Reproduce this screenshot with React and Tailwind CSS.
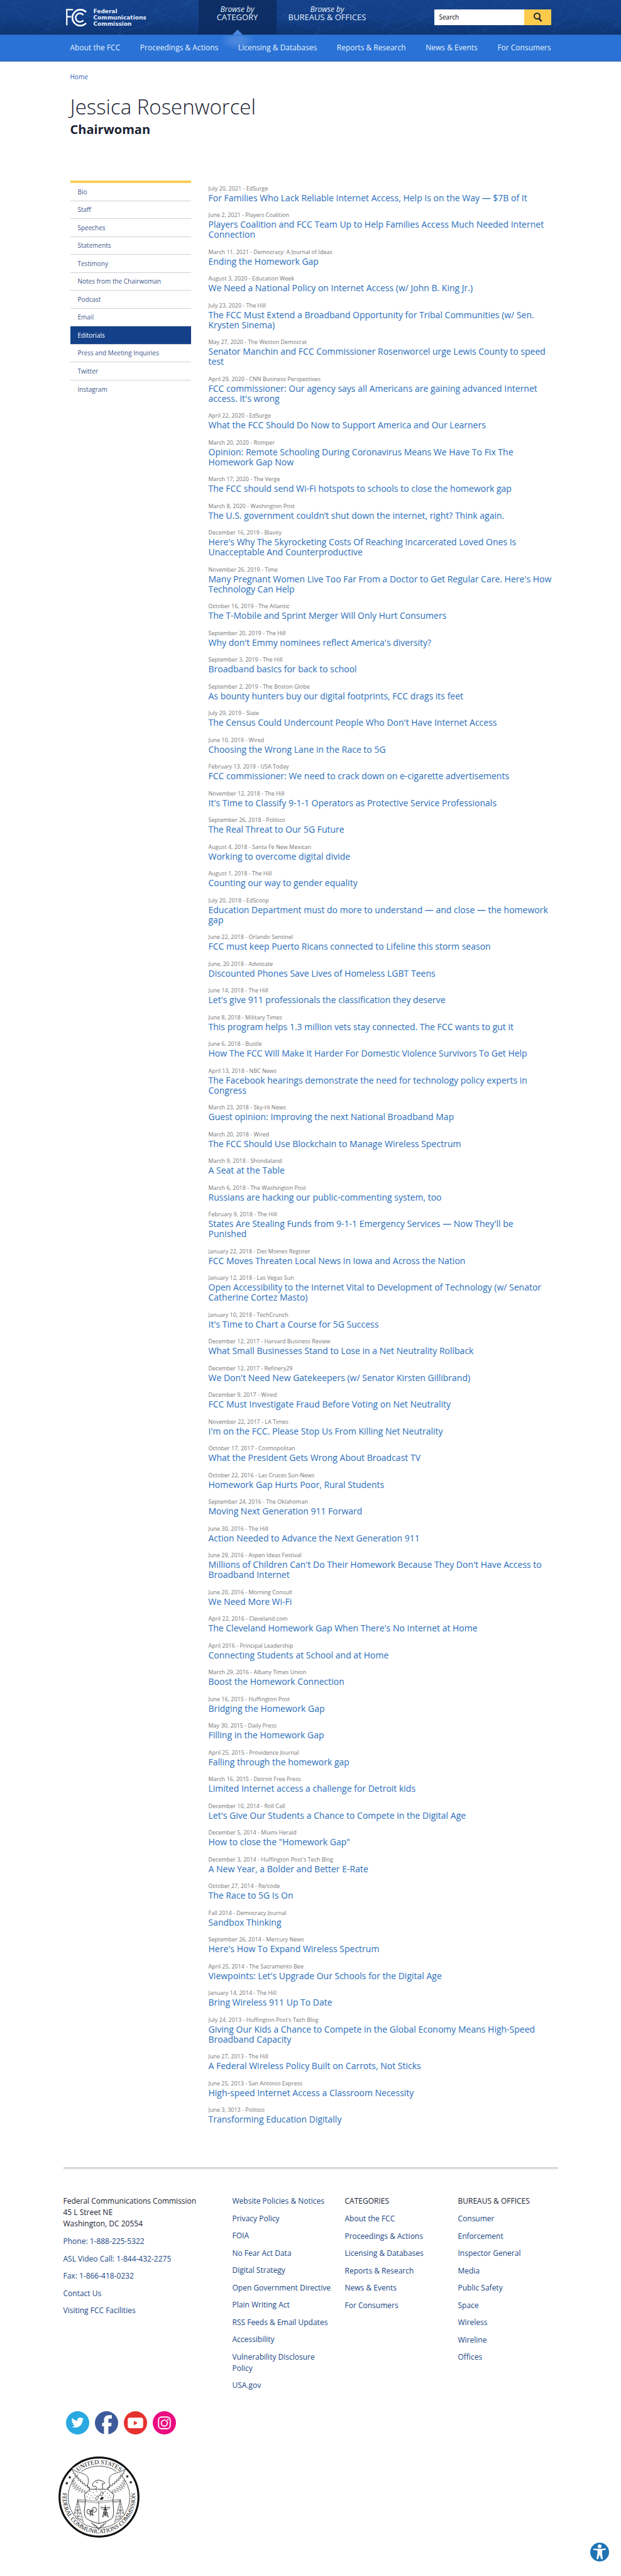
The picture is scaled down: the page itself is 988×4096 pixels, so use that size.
import React from "react";

const articles = [
  ["July 20, 2021 - EdSurge", "For Families Who Lack Reliable Internet Access, Help Is on the Way — $7B of It"],
  ["June 2, 2021 - Players Coalition", "Players Coalition and FCC Team Up to Help Families Access Much Needed Internet Connection"],
  ["March 11, 2021 - Democracy: A Journal of Ideas", "Ending the Homework Gap"],
  ["August 3, 2020 - Education Week", "We Need a National Policy on Internet Access (w/ John B. King Jr.)"],
  ["July 23, 2020 - The Hill", "The FCC Must Extend a Broadband Opportunity for Tribal Communities (w/ Sen. Krysten Sinema)"],
  ["May 27, 2020 - The Weston Democrat", "Senator Manchin and FCC Commissioner Rosenworcel urge Lewis County to speed test"],
  ["April 29, 2020 - CNN Business Perspectives", "FCC commissioner: Our agency says all Americans are gaining advanced Internet access. It's wrong"],
  ["April 22, 2020 - EdSurge", "What the FCC Should Do Now to Support America and Our Learners"],
  ["March 20, 2020 - Romper", "Opinion: Remote Schooling During Coronavirus Means We Have To Fix The Homework Gap Now"],
  ["March 17, 2020 - The Verge", "The FCC should send Wi-Fi hotspots to schools to close the homework gap"],
  ["March 8, 2020 - Washington Post", "The U.S. government couldn’t shut down the internet, right? Think again."],
  ["December 16, 2019 - Blavity", "Here's Why The Skyrocketing Costs Of Reaching Incarcerated Loved Ones Is Unacceptable And Counterproductive"],
  ["November 26, 2019 - Time", "Many Pregnant Women Live Too Far From a Doctor to Get Regular Care. Here's How Technology Can Help"],
  ["October 16, 2019 - The Atlantic", "The T-Mobile and Sprint Merger Will Only Hurt Consumers"],
  ["September 20, 2019 - The Hill", "Why don't Emmy nominees reflect America's diversity?"],
  ["September 3, 2019 - The Hill", "Broadband basics for back to school"],
  ["September 2, 2019 - The Boston Globe", "As bounty hunters buy our digital footprints, FCC drags its feet"],
  ["July 29, 2019 - Slate", "The Census Could Undercount People Who Don't Have Internet Access"],
  ["June 10, 2019 - Wired", "Choosing the Wrong Lane in the Race to 5G"],
  ["February 13, 2019 - USA Today", "FCC commissioner: We need to crack down on e-cigarette advertisements"],
  ["November 12, 2018 - The Hill", "It's Time to Classify 9-1-1 Operators as Protective Service Professionals"],
  ["September 26, 2018 - Politico", "The Real Threat to Our 5G Future"],
  ["August 4, 2018 - Santa Fe New Mexican", "Working to overcome digital divide"],
  ["August 1, 2018 - The Hill", "Counting our way to gender equality"],
  ["July 20, 2018 - EdScoop", "Education Department must do more to understand — and close — the homework gap"],
  ["June 22, 2018 - Orlando Sentinel", "FCC must keep Puerto Ricans connected to Lifeline this storm season"],
  ["June, 20 2018 - Advocate", "Discounted Phones Save Lives of Homeless LGBT Teens"],
  ["June 14, 2018 - The Hill", "Let's give 911 professionals the classification they deserve"],
  ["June 8, 2018 - Military Times", "This program helps 1.3 million vets stay connected. The FCC wants to gut it"],
  ["June 6, 2018 - Bustle", "How The FCC Will Make It Harder For Domestic Violence Survivors To Get Help"],
  ["April 13, 2018 - NBC News", "The Facebook hearings demonstrate the need for technology policy experts in Congress"],
  ["March 23, 2018 - Sky-Hi News", "Guest opinion: Improving the next National Broadband Map"],
  ["March 20, 2018 - Wired", "The FCC Should Use Blockchain to Manage Wireless Spectrum"],
  ["March 9, 2018 - Shondaland", "A Seat at the Table"],
  ["March 6, 2018 - The Washington Post", "Russians are hacking our public-commenting system, too"],
  ["February 9, 2018 - The Hill", "States Are Stealing Funds from 9-1-1 Emergency Services — Now They'll be Punished"],
  ["January 22, 2018 - Des Moines Register", "FCC Moves Threaten Local News in Iowa and Across the Nation"],
  ["January 12, 2018 - Las Vegas Sun", "Open Accessibility to the Internet Vital to Development of Technology (w/ Senator Catherine Cortez Masto)"],
  ["January 10, 2018 - TechCrunch", "It's Time to Chart a Course for 5G Success"],
  ["December 12, 2017 - Harvard Business Review", "What Small Businesses Stand to Lose in a Net Neutrality Rollback"],
  ["December 12, 2017 - Refinery29", "We Don't Need New Gatekeepers (w/ Senator Kirsten Gillibrand)"],
  ["December 9, 2017 - Wired", "FCC Must Investigate Fraud Before Voting on Net Neutrality"],
  ["November 22, 2017 - LA Times", "I'm on the FCC. Please Stop Us From Killing Net Neutrality"],
  ["October 17, 2017 - Cosmopolitan", "What the President Gets Wrong About Broadcast TV"],
  ["October 22, 2016 - Las Cruces Sun-News", "Homework Gap Hurts Poor, Rural Students"],
  ["September 24, 2016 - The Oklahoman", "Moving Next Generation 911 Forward"],
  ["June 30, 2016 - The Hill", "Action Needed to Advance the Next Generation 911"],
  ["June 29, 2016 - Aspen Ideas Festival", "Millions of Children Can't Do Their Homework Because They Don't Have Access to Broadband Internet"],
  ["June 20, 2016 - Morning Consult", "We Need More Wi-Fi"],
  ["April 22, 2016 - Cleveland.com", "The Cleveland Homework Gap When There's No Internet at Home"],
  ["April 2016 - Principal Leadership", "Connecting Students at School and at Home"],
  ["March 29, 2016 - Albany Times Union", "Boost the Homework Connection"],
  ["June 16, 2015 - Huffington Post", "Bridging the Homework Gap"],
  ["May 30, 2015 - Daily Press", "Filling in the Homework Gap"],
  ["April 25, 2015 - Providence Journal", "Falling through the homework gap"],
  ["March 16, 2015 - Detroit Free Press", "Limited Internet access a challenge for Detroit kids"],
  ["December 10, 2014 - Roll Call", "Let's Give Our Students a Chance to Compete in the Digital Age"],
  ["December 5, 2014 - Miami Herald", "How to close the \"Homework Gap\""],
  ["December 3, 2014 - Huffington Post's Tech Blog", "A New Year, a Bolder and Better E-Rate"],
  ["October 27, 2014 - Re/code", "The Race to 5G Is On"],
  ["Fall 2014 - Democracy Journal", "Sandbox Thinking"],
  ["September 26, 2014 - Mercury News", "Here's How To Expand Wireless Spectrum"],
  ["April 25, 2014 - The Sacramento Bee", "Viewpoints: Let's Upgrade Our Schools for the Digital Age"],
  ["January 14, 2014 - The Hill", "Bring Wireless 911 Up To Date"],
  ["July 24, 2013 - Huffington Post's Tech Blog", "Giving Our Kids a Chance to Compete in the Global Economy Means High-Speed Broadband Capacity"],
  ["June 27, 2013 - The Hill", "A Federal Wireless Policy Built on Carrots, Not Sticks"],
  ["June 25, 2013 - San Antonio Express", "High-speed Internet Access a Classroom Necessity"],
  ["June 3, 3013 - Politico", "Transforming Education Digitally"],
];

const sideLinks = ["Bio", "Staff", "Speeches", "Statements", "Testimony", "Notes from the Chairwoman", "Podcast", "Email", "Editorials", "Press and Meeting Inquiries", "Twitter", "Instagram"];
const categories = ["About the FCC", "Proceedings & Actions", "Licensing & Databases", "Reports & Research", "News & Events", "For Consumers"];
const policies = ["Website Policies & Notices", "Privacy Policy", "FOIA", "No Fear Act Data", "Digital Strategy", "Open Government Directive", "Plain Writing Act", "RSS Feeds & Email Updates", "Accessibility", "Vulnerability Disclosure Policy", "USA.gov"];
const bureaus = ["Consumer", "Enforcement", "Inspector General", "Media", "Public Safety", "Space", "Wireless", "Wireline", "Offices"];
const contacts = ["Phone: 1-888-225-5322", "ASL Video Call: 1-844-432-2275", "Fax: 1-866-418-0232", "Contact Us", "Visiting FCC Facilities"];

const meshNodes = [
  [20, 8], [75, 46], [128, 4], [190, 52], [246, 18], [298, 6], [352, 40], [404, 12],
  [452, 24], [504, 52], [560, 10], [612, 40], [668, 30], [716, 6], [770, 48], [826, 16], [880, 50], [934, 14], [980, 40],
];

function HeaderMesh() {
  const lines = [];
  meshNodes.forEach(([x, y], i) => {
    [[-60, 30], [-48, -26], [-22, 44], [16, -40], [30, 42], [58, 22], [62, -18], [40, -44]].forEach(([dx, dy], j) => {
      lines.push(<line key={i + "-" + j} x1={x} y1={y} x2={x + dx * 1.3} y2={y + dy * 1.3} />);
    });
  });
  return (
    <svg className="absolute inset-0 h-full w-full" viewBox="0 0 988 55" preserveAspectRatio="xMidYMid slice" stroke="#5b93dd" strokeWidth="0.8" opacity="0.16" aria-hidden="true">
      {lines}
    </svg>
  );
}

function LogoMark() {
  return (
    <svg className="h-7 w-[33px]" viewBox="0 0 135 115" fill="none" stroke="#fff" aria-hidden="true">
      <path d="M5 108V6H46M5 52H34" strokeWidth="9" />
      <path d="M131 22A52 52 0 1 0 131 94" strokeWidth="11" />
      <path d="M113 41A28 28 0 1 0 113 75" strokeWidth="10" />
    </svg>
  );
}

function Star({ x, y, r }) {
  return <path transform={`translate(${x} ${y}) rotate(${r})`} d="M0-9 2.6-3 9-2.6 4 1.6 5.6 8 0 4.4-5.6 8-4 1.6-9-2.6-2.6-3Z" fill="#000" />;
}

function Wing() {
  return (
    <g>
      <path d="M88 80Q118 104 150 108Q186 118 194 140Q198 170 190 190Q196 206 208 214" strokeWidth="3" />
      <path d="M88 80l6 18 8 2-4 12 14 2-6 14 18 0-4 14 14-2-4 16 16-4-2 16 14-4 0 16 14-4 2 16 14-4 2 14 14 0-4 16 8 8-8 20-12 6" strokeWidth="3" />
      <path d="M100 140l-14 26 20-10-18 28 26-14-22 28 32-14-24 26 36-16-24 26 36-16-18 24 32-14-14 22 28-14-8 20 22-14" strokeWidth="2" />
    </g>
  );
}

function Tower() {
  return (
    <g strokeWidth="2">
      <path d="M126 282L100 384M126 282L164 434M126 282V400M118 312h16M114 330h24M108 350h36M103 370h46M108 388l46 8M118 404l38 8M112 342l32 30M140 342l-36 28M132 404l30 20M146 370l-28 36" />
    </g>
  );
}

function Seal() {
  return (
    <svg className="h-[129px] w-[129px]" viewBox="0 0 530 530" fill="none" stroke="#111" role="img" aria-label="Seal of the Federal Communications Commission">
      <circle cx="265" cy="265" r="258" strokeWidth="13" fill="#fff" />
      <circle cx="265" cy="265" r="202" strokeWidth="3" />
      <defs>
        <path id="sealTop" d="M49 265A216 216 0 0 1 481 265" />
        <path id="sealRing" d="M56 150A238 238 0 1 0 474 150" />
      </defs>
      <path d="M88 80L120 60 410 60 438 80 400 118 130 118Z" fill="#fff" stroke="none" />
      <path d="M150 98A202 202 0 0 1 380 98" strokeWidth="3" />
      <g fill="#111" stroke="none" fontFamily="'Liberation Serif', serif" fontSize="40">
        <text textAnchor="middle"><textPath href="#sealTop" startOffset="50%">UNITED STATES</textPath></text>
        <text fontSize="39" textAnchor="middle"><textPath href="#sealRing" startOffset="50%">FEDERAL COMMUNICATIONS COMMISSION</textPath></text>
      </g>
      <Star x={74} y={136} r={-20} />
      <Star x={55} y={174} r={-10} />
      <Star x={450} y={130} r={20} />
      <Star x={473} y={168} r={10} />
      <Wing />
      <g transform="translate(526 0) scale(-1 1)"><Wing /></g>
      <path d="M222 182Q236 154 264 154Q288 156 304 172Q298 180 286 178Q290 196 288 212M222 182Q222 196 232 198Q244 188 250 204Q246 212 240 214M244 166l14 6" strokeWidth="3.5" />
      <path d="M208 214H322L362 250Q352 282 358 320Q366 382 350 404Q320 426 263 438Q200 422 178 400Q164 380 172 330Q182 290 170 250Z" fill="#fff" strokeWidth="3.5" />
      <g fill="#222" stroke="none">
        {[[206, 228], [228, 236], [196, 246], [214, 256], [238, 252], [188, 262], [204, 272], [226, 268], [304, 228], [290, 238], [320, 240], [334, 252], [308, 258], [324, 268], [340, 268], [250, 226], [274, 224]].map(([x, y]) => (
          <circle key={x + "-" + y} cx={x} cy={y} r="2.6" />
        ))}
      </g>
      <path d="M240 276l14-20 10 8-14 20zM270 250l14-20 12 8-14 20zM258 262l14-10M272 278q16 6 22-10" strokeWidth="3" />
      <path d="M278 268q14-10 16 4-6 14-22 8z" fill="#222" />
      <path d="M124 280L263 292 406 280M124 288L263 304 406 288M124 294L172 300M358 300L406 294" strokeWidth="2" />
      <path d="M263 292V438" strokeWidth="2.5" />
      <Tower />
      <g transform="translate(530 0) scale(-1 1)"><Tower /></g>
      <g strokeWidth="3.5">
        <ellipse cx="198" cy="360" rx="12" ry="15" />
        <ellipse cx="234" cy="348" rx="15" ry="16" />
        <path d="M216 354l-10 34M216 354l12 34M208 372l18 14M226 372l-18 14M198 360l36-12" />
        <path d="M306 330L288 396M306 330L326 396M306 318v70M284 334h44M288 346h36M298 364h18M294 380l28-14M318 382l-26-16M280 326v16M332 326v16M288 396l18-16 20 16" />
      </g>
      <path d="M216 426l4 16 12-2 0 14 14-2 2 12 15 10 15-10 2-12 14 2 0-14 12 2 4-16M236 444l27 28 27-28" strokeWidth="3" />
    </svg>
  );
}

function Socials() {
  return (
    <div className="flex gap-[9px]">
      <a href="#twitter" aria-label="Twitter">
        <svg className="h-[37px] w-[37px]" viewBox="0 0 50 50" aria-hidden="true">
          <circle cx="25" cy="25" r="25" fill="#29a9e0" />
          <path transform="translate(11.5 11) scale(1.12)" fill="#fff" d="M24 4.6c-.9.4-1.800.7-2.800.8 1-.6 1.800-1.600 2.200-2.700-1 .6-2 1-3.100 1.200a4.900 4.900 0 0 0-8.400 4.500C7.700 8.200 4.100 6.300 1.700 3.200a4.900 4.900 0 0 0 1.500 6.600c-.8 0-1.600-.2-2.200-.6v.1c0 2.400 1.700 4.400 3.900 4.800-.7.2-1.500.2-2.200.1.600 2 2.400 3.400 4.600 3.400A9.900 9.900 0 0 1 0 19.500 14 14 0 0 0 7.500 21.700c9.100 0 14-7.500 14-14v-.6c1-.7 1.800-1.600 2.500-2.500z" />
        </svg>
      </a>
      <a href="#facebook" aria-label="Facebook">
        <svg className="h-[37px] w-[37px]" viewBox="0 0 50 50" aria-hidden="true">
          <circle cx="25" cy="25" r="25" fill="#3d5a9a" />
          <path fill="#fff" d="M19.500 50V32.500H15.500V25H19.500V19.500C19.500 12.500 23.500 8.500 30 8.500H36.500V16H32C30 16 29 17 29 19V25H36L35 32.500H29V50Z" />
        </svg>
      </a>
      <a href="#youtube" aria-label="YouTube">
        <svg className="h-[37px] w-[37px]" viewBox="0 0 50 50" aria-hidden="true">
          <circle cx="25" cy="25" r="25" fill="#e6322f" />
          <rect x="8.500" y="14" width="33" height="22.500" rx="4.500" fill="#fff" />
          <path d="M21.500 20.500L30 25.200 21.500 30Z" fill="#e6322f" />
        </svg>
      </a>
      <a href="#instagram" aria-label="Instagram">
        <svg className="h-[37px] w-[37px]" viewBox="0 0 50 50" fill="none" stroke="#fff" aria-hidden="true">
          <circle cx="25" cy="25" r="25" fill="#ec0b80" stroke="none" />
          <rect x="12.500" y="12.500" width="25" height="25" rx="6.500" strokeWidth="2.500" />
          <circle cx="25" cy="25.500" r="6.500" strokeWidth="2.500" />
          <circle cx="32.500" cy="18" r="1.700" fill="#fff" stroke="none" />
        </svg>
      </a>
    </div>
  );
}

function LinkList({ items }) {
  return (
    <ul>
      {items.map((t) => (
        <li key={t} className="mb-[10px] even:mb-[9px] last:mb-0">
          <a href="#link" className="text-[#1b4785]">{t}</a>
        </li>
      ))}
    </ul>
  );
}

export default function App() {
  return (
    <div className="bg-white font-['Open_Sans',sans-serif] text-[#1b2333]">
      <header>
        <div className="relative bg-linear-to-b from-[#154289] via-[#123f88] to-[#0e3471]">
          <HeaderMesh />
          <div className="relative mx-auto flex h-[55px] max-w-[787px] items-stretch">
            <a href="#home" className="flex w-[215px] items-center gap-[11px] pl-1">
              <LogoMark />
              <span className="font-['DejaVu_Sans',sans-serif] text-[9px] leading-[10px] font-bold text-[#e4eefb]">
                Federal<br />Communications<br />Commission
              </span>
            </a>
            <nav aria-label="Browse" className="flex text-center text-xs leading-[12px] text-[#e6f1fb]">
              <button type="button" className="relative flex w-[124px] flex-col items-center bg-[#0b2a5e]/80 pt-[9px]">
                <em>Browse by</em>
                <span className="text-[13px]">CATEGORY</span>
                <svg className="absolute bottom-0 left-1/2 h-2 w-4 -translate-x-1/2" viewBox="0 0 16 8" aria-hidden="true"><path d="M8 0l8 8H0z" fill="#4c88df" /></svg>
              </button>
              <button type="button" className="flex w-[162px] flex-col items-center pt-[9px]">
                <em>Browse by</em>
                <span className="text-[13px]">BUREAUS &amp; OFFICES</span>
              </button>
            </nav>
            <form className="mr-[11px] ml-auto flex h-[25px] self-center" onSubmit={(e) => e.preventDefault()}>
              <input type="text" aria-label="Search" placeholder="Search" className="w-[143px] rounded-none bg-white px-2 text-[10px] text-black placeholder:text-black focus:outline-none" />
              <button type="submit" aria-label="Submit search" className="flex w-[43px] items-center justify-center bg-[#fdcb4c]">
                <svg className="h-[15px] w-[15px]" viewBox="0 0 15 15" fill="none" stroke="#1b2333" aria-hidden="true">
                  <circle cx="6.500" cy="5.500" r="4.500" strokeWidth="2" />
                  <path d="M9.500 9l4 5" strokeWidth="2.600" />
                </svg>
              </button>
            </form>
          </div>
        </div>
        <nav aria-label="Categories" className="border-t border-b-2 border-t-[#2d69bf] border-b-[#3a70c2] bg-[#2a72d5]">
          <ul className="mx-auto flex h-10 max-w-[787px] items-center justify-between bg-[radial-gradient(ellipse_28px_16px_at_277px_8px,#4b87de_30%,transparent)] px-[11px] text-xs text-[#e6f3fd]">
            {categories.map((t) => (
              <li key={t}><a href="#category">{t}</a></li>
            ))}
          </ul>
        </nav>
      </header>

      <main className="mx-auto max-w-[787px] pt-4 pr-[7px] pl-[11px]">
        <a href="#home" className="block text-[10px] leading-4 text-[#2c62b4]">Home</a>
        <h1 className="mt-5 text-[33px] leading-10 font-light">Jessica Rosenworcel</h1>
        <p className="mt-1 text-xl leading-6 font-bold">Chairwoman</p>

        <div className="mt-[69px] flex items-start gap-7">
          <nav aria-label="Chairwoman pages" className="w-[192px] shrink-0 border-t-4 border-[#f8cf55]">
            <ul className="text-[10px] text-[#3f5a8c]">
              {sideLinks.map((t) => (
                <li key={t} className="h-[29px] border-b border-[#cfd1d4] last:border-b-0 even:h-7">
                  <a href="#page" className={t === "Editorials" ? "flex h-full items-center bg-[#14408a] pl-3 text-white" : "flex h-full items-center pl-3"}>{t}</a>
                </li>
              ))}
            </ul>
          </nav>
          <ul className="min-w-0 flex-1 pt-[6px]">
            {articles.map(([meta, title]) => (
              <li key={title} className="mb-3 even:mb-[13px]">
                <p className="text-[9px] leading-[14px] text-[#777]">{meta}</p>
                <a href="#article" className="block text-sm leading-4 text-[#2a6ebb]">{title}</a>
              </li>
            ))}
          </ul>
        </div>
      </main>

      <footer className="mx-auto mt-[55px] max-w-[787px] pb-[60px] text-xs leading-[18px]">
        <div className="grid grid-cols-[269fr_179fr_180fr_159fr] border-t-[3px] border-double border-[#bfc0c2] pt-[42px]">
          <div>
            <address className="mb-[10px] not-italic">Federal Communications Commission<br />45 L Street NE<br />Washington, DC 20554</address>
            <LinkList items={contacts} />
          </div>
          <div className="pr-4"><LinkList items={policies} /></div>
          <div>
            <h2 className="mb-[10px]">CATEGORIES</h2>
            <LinkList items={categories} />
          </div>
          <div>
            <h2 className="mb-[10px]">BUREAUS &amp; OFFICES</h2>
            <LinkList items={bureaus} />
          </div>
        </div>
        <div className="mt-8 pl-1"><Socials /></div>
        <div className="mt-[35px] -ml-2"><Seal /></div>
      </footer>

      <button type="button" aria-label="Accessibility options" className="fixed right-[19px] bottom-[23px]">
        <svg className="h-[30px] w-[30px]" viewBox="0 0 120 120" aria-hidden="true">
          <circle cx="60" cy="60" r="60" fill="#1f74b4" />
          <circle cx="60" cy="23" r="12" fill="#fff" />
          <path fill="#fff" d="M20 38Q38 40 60 39Q82 40 98 36Q103 41 98 45L76 50V72L80 103Q74 108 69 103L60 76 51 103Q44 108 40 103L46 72V50L22 46Q17 42 20 38Z" />
        </svg>
      </button>
    </div>
  );
}
